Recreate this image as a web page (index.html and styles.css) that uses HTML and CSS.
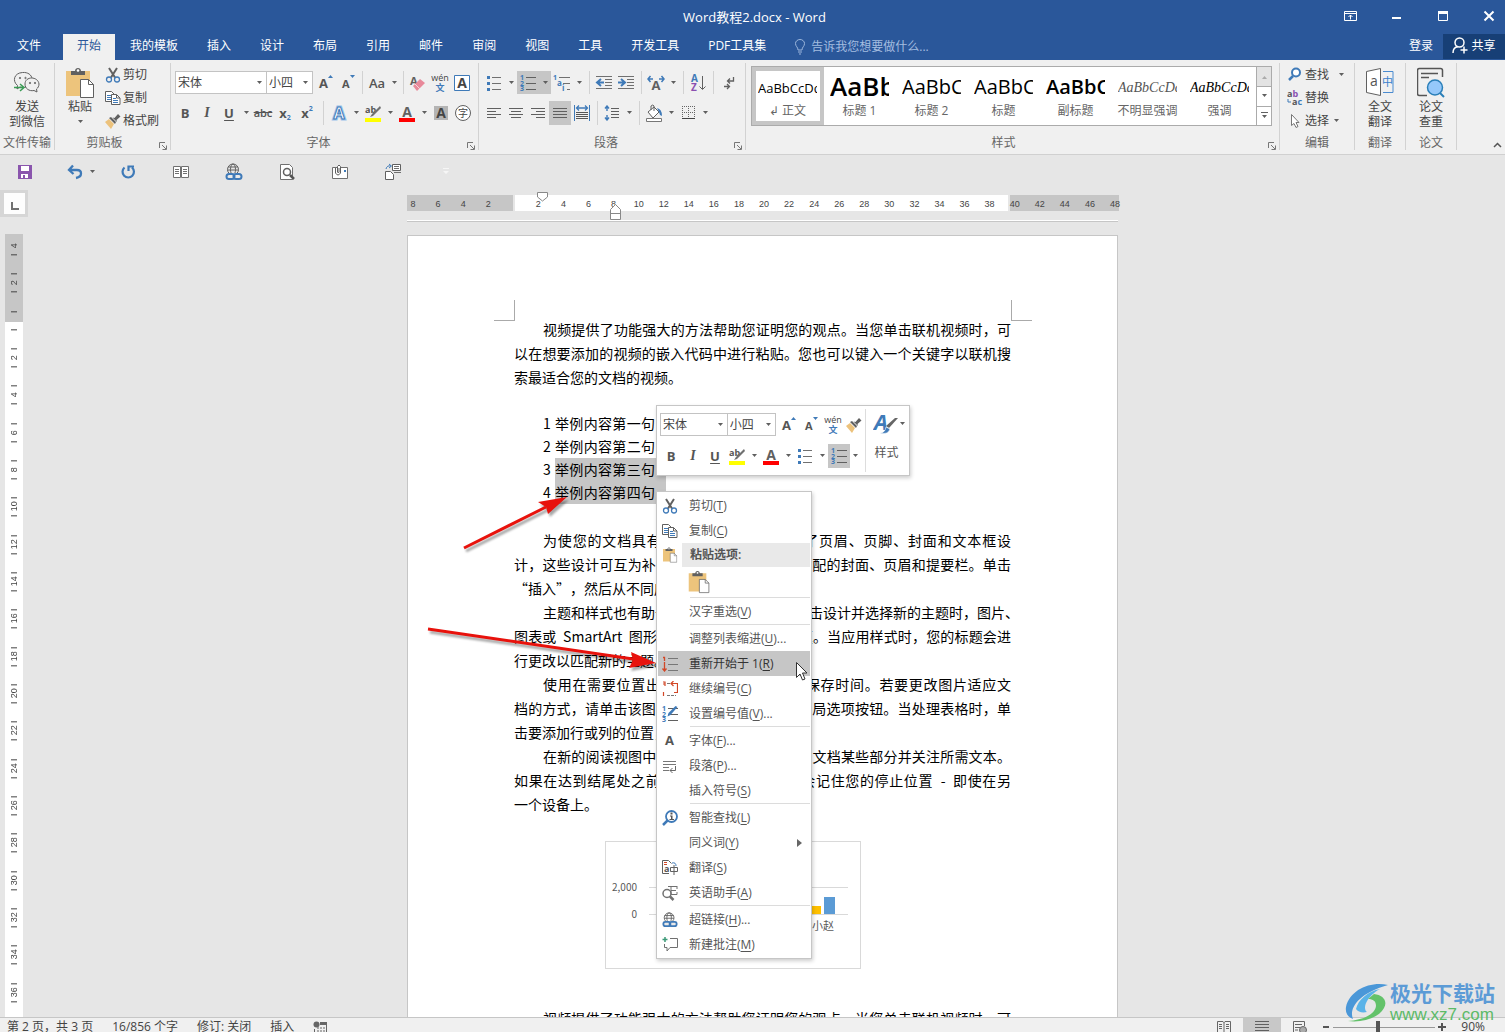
FILE: index.html
```html
<!DOCTYPE html>
<html lang="zh-CN">
<head>
<meta charset="utf-8">
<title>Word教程2.docx - Word</title>
<link rel="stylesheet" href="styles.css">
</head>
<body>
<svg class="defs" aria-hidden="true">
  <symbol id="caret" viewBox="0 0 7 4"><path d="M1 0h5L3.500 3z" fill="#5f5f5f"/></symbol>
  <symbol id="launcher" viewBox="0 0 8 8"><path d="M.5 6V.5H6M3 3l4 4M7.500 3.500v4h-4" fill="none" stroke="#777"/></symbol>
  <symbol id="cut" viewBox="0 0 16 16"><path d="M4 1l6 9.500M12 1l-6 9.500" stroke="#606060" stroke-width="2" fill="none"/><circle cx="4" cy="12.500" r="2.500" fill="none" stroke="#3f7ab8" stroke-width="1.300"/><circle cx="12" cy="12.500" r="2.500" fill="none" stroke="#3f7ab8" stroke-width="1.300"/></symbol>
  <symbol id="copy" viewBox="0 0 16 16"><path d="M.5 1.500h6l3 3v7h-9z" fill="#fff" stroke="#606060"/><path d="M2 5.500h4M2 7.500h4M2 9.500h4" stroke="#3f7ab8"/><path d="M6.500 4.500h5l3.500 3.500v6.500H6.500z" fill="#fff" stroke="#606060"/><path d="M11.500 4.500V8H15" fill="none" stroke="#606060"/><path d="M8 8.500h3M8 10.500h5M8 12.500h5" stroke="#3f7ab8"/></symbol>
  <symbol id="brush" viewBox="0 0 16 16"><path d="M0 9l4-3 5 5-3 5z" fill="#ecc27c"/><path d="M4 5l2-1 5 5-1 2z" fill="#606060"/><path d="M7.500 4.500l2 .5 3.500-4 2.500 2.500-4 3.500.5 2z" fill="#606060"/></symbol>
  <symbol id="paste" viewBox="0 0 30 32"><path d="M1 4h24v25H1z" fill="#edc47c"/><path d="M6 8V4h4c0-4 6-4 6 0h4v4z" fill="#606060"/><circle cx="13" cy="3.500" r="1.300" fill="#fff"/><path d="M15.500 12.500h8l5 5v13h-13z" fill="#fff" stroke="#606060"/><path d="M23.500 12.500v5h5" fill="none" stroke="#606060"/></symbol>
  <symbol id="grow" viewBox="0 0 18 18"><text x="2" y="14" class="ic b" font-size="13" fill="#555">A</text><path d="M11 4l2.500-3L16 4z" fill="#3f7ab8"/></symbol>
  <symbol id="shrink" viewBox="0 0 18 18"><text x="3" y="14" class="ic b" font-size="11" fill="#555">A</text><path d="M11 1h5l-2.500 3z" fill="#3f7ab8"/></symbol>
  <symbol id="wen" viewBox="0 0 18 18"><text x="9" y="7" text-anchor="middle" class="ic" font-size="9" fill="#444">wén</text><text x="9" y="17" text-anchor="middle" class="ic b" font-size="9" fill="#3f7ab8">文</text></symbol>
  <symbol id="mark" viewBox="0 0 18 18"><text x="1" y="9" class="ic b" font-size="9" fill="#555">ab</text><path d="M16 2L8 10l-2 3 3-1 8-8z" fill="#707070"/><path d="M1 14h16v4H1z" fill="#ff0"/></symbol>
  <symbol id="fcolor" viewBox="0 0 18 18"><text x="9" y="13" text-anchor="middle" class="ic b" font-size="14" fill="#606060">A</text><path d="M1 14h16v4H1z" fill="#f00"/></symbol>
  <symbol id="bullets" viewBox="0 0 16 16"><path d="M6 2.500h9M6 8.500h9M6 14.500h9" stroke="#707070"/><path d="M1 1h3v3H1zM1 7h3v3H1zM1 13h3v3H1z" fill="#3f7ab8"/></symbol>
  <symbol id="numbers" viewBox="0 0 16 16"><path d="M6 2.500h10M6 8.500h10M6 14.500h10" stroke="#606060"/><text class="ic b" font-size="7" fill="#3f7ab8" x="0" y="5">1</text><text class="ic b" font-size="7" fill="#3f7ab8" x="0" y="11">2</text><text class="ic b" font-size="7" fill="#3f7ab8" x="0" y="16">3</text></symbol>
  <symbol id="globe" viewBox="0 0 18 18"><g fill="none" stroke="#606060"><circle cx="8" cy="6.500" r="5.500"/><ellipse cx="8" cy="6.500" rx="2.500" ry="5.500"/><path d="M3 4h10M2.500 7h11"/></g><path d="M1 10h16v7H1z" fill="#e9e9e9"/><rect x="1.500" y="11" width="8" height="5" rx="2.500" fill="none" stroke="#3f7ab8" stroke-width="2"/><rect x="8.500" y="11" width="8" height="5" rx="2.500" fill="none" stroke="#3f7ab8" stroke-width="2"/></symbol>
</svg>

<div class="app">
  <header class="titlebar">
    <h1 class="title">Word教程2.docx - Word</h1>
    <div class="winctl">
      <button aria-label="功能区显示选项"><svg width="14" height="12" viewBox="0 0 14 12" fill="none" stroke="#fff"><path d="M.5 1.500h12v9H.5zM.5 3.500h12M6.500 9.500V5M4.500 7l2-2 2 2"/></svg></button>
      <button aria-label="最小化"><svg width="12" height="12" viewBox="0 0 12 12"><path d="M1 7h9v2H1z" fill="#fff"/></svg></button>
      <button aria-label="最大化"><svg width="12" height="12" viewBox="0 0 12 12"><path d="M1.500 2v8.500h9V2" fill="none" stroke="#fff"/><path d="M1 1h10v3H1z" fill="#fff"/></svg></button>
      <button aria-label="关闭"><svg width="12" height="12" viewBox="0 0 12 12"><path d="M1.500 1.500l9 9M10.500 1.500l-9 9" stroke="#fff" stroke-width="2"/></svg></button>
    </div>
  </header>

  <nav class="tabs">
    <button class="tab file">文件</button><button class="tab active">开始</button><button class="tab">我的模板</button><button class="tab">插入</button><button class="tab">设计</button><button class="tab">布局</button><button class="tab">引用</button><button class="tab">邮件</button><button class="tab">审阅</button><button class="tab">视图</button><button class="tab">工具</button><button class="tab">开发工具</button><button class="tab">PDF工具集</button>
    <button class="tell"><svg width="12" height="16" viewBox="0 0 12 16" fill="none" stroke="#9cb6dc"><path d="M4 11c0-3-2.500-3.500-2.500-6.500a4.500 4 0 0 1 9 0C10.500 7.500 8 8 8 11zM4 13h4M5 15h2"/></svg>告诉我您想要做什么...</button>
    <button class="login">登录</button>
    <button class="share"><svg width="16" height="17" viewBox="0 0 16 17" fill="none" stroke="#fff" stroke-width="1.500"><circle cx="7.500" cy="5.500" r="4.500"/><path d="M1 16c0-4 2-6 5-6.500M8.500 13h7M12 9.500v7"/></svg>共享</button>
  </nav>

  <section class="ribbon">
    <div class="group g-wechat">
      <div class="body">
        <button class="big"><svg width="28" height="32" viewBox="0 0 28 32" fill="none" stroke="#606060"><path d="M13 20c-2 .5-4 .5-6 0l-3 2 .5-3.500C-1 14 1 6 9.500 5.500 15 5 18.500 8 19 11.500"/><path d="M12 17c0-8 13-8 14 0 0 2-1 4-2.500 5l.5 3-3-1.500c-5 1-9-2-9-6.500z" fill="#f0f0f0"/><circle cx="7" cy="11" r=".7"/><circle cx="12.500" cy="11" r=".7"/><circle cx="17" cy="16" r=".7"/><circle cx="22" cy="16" r=".7"/><path d="M1 20.500h9M7 17l4 3.500L7 24" stroke="#3a9c55" stroke-width="1.500"/></svg>发送<br>到微信</button>
      </div>
      <div class="label">文件传输</div>
    </div>
    <div class="group g-clip launch">
      <div class="body">
        <button class="big"><svg width="30" height="32"><use href="#paste"/></svg>粘贴<svg class="caret below"><use href="#caret"/></svg></button>
        <div class="stack">
          <button class="small"><svg width="16" height="16"><use href="#cut"/></svg>剪切</button>
          <button class="small"><svg width="16" height="16"><use href="#copy"/></svg>复制</button>
          <button class="small"><svg width="16" height="16"><use href="#brush"/></svg>格式刷</button>
        </div>
      </div>
      <div class="label">剪贴板</div><svg class="launcher"><use href="#launcher"/></svg>
    </div>
    <div class="group g-font launch">
      <div class="rows">
        <div class="row">
          <span class="combo wide"><select aria-label="字体"><option>宋体</option></select><svg class="caret"><use href="#caret"/></svg></span><span class="combo"><select aria-label="字号"><option>小四</option></select><svg class="caret"><use href="#caret"/></svg></span>
          <button class="tb first" aria-label="增大字号"><svg width="18" height="18"><use href="#grow"/></svg></button>
          <button class="tb" aria-label="减小字号"><svg width="18" height="18"><use href="#shrink"/></svg></button>
          <i class="sep"></i>
          <button class="tb drop"><span class="aa">Aa</span><svg class="caret"><use href="#caret"/></svg></button>
          <i class="sep"></i>
          <button class="tb" aria-label="清除格式"><svg width="18" height="18" viewBox="0 0 18 18"><text x="1" y="11" class="ic b" font-size="11" fill="#606060">A</text><path d="M4 12l7-7 5 4-8 8z" fill="#e8899a"/><path d="M6 10l5 5" stroke="#f5d5da"/></svg></button>
          <button class="tb" aria-label="拼音指南"><svg width="18" height="18"><use href="#wen"/></svg></button>
          <button class="tb" aria-label="字符边框"><svg width="18" height="18" viewBox="0 0 18 18"><path d="M1.500 1.500h15v15h-15z" fill="#fff" stroke="#3f7ab8"/><text x="9" y="14" text-anchor="middle" class="ic b" font-size="14" fill="#444">A</text></svg></button>
        </div>
        <div class="row second">
          <button class="tb bold">B</button><button class="tb ital">I</button>
          <button class="tb drop"><span class="und">U</span><svg class="caret"><use href="#caret"/></svg></button>
          <button class="tb strike">abc</button>
          <button class="tb bold">x<sub>2</sub></button><button class="tb bold">x<sup>2</sup></button>
          <i class="sep wide"></i>
          <button class="tb drop" aria-label="文本效果"><svg width="18" height="18" viewBox="0 0 18 18"><text x="9" y="15" text-anchor="middle" class="ic b" font-size="16" fill="#fff" stroke="#9cc3ea" stroke-width="3">A</text><text x="9" y="15" text-anchor="middle" class="ic b" font-size="16" fill="#fff" stroke="#3f7ab8">A</text></svg><svg class="caret"><use href="#caret"/></svg></button>
          <button class="tb drop" aria-label="突出显示"><svg width="18" height="18"><use href="#mark"/></svg><svg class="caret"><use href="#caret"/></svg></button>
          <button class="tb drop" aria-label="字体颜色"><svg width="18" height="18"><use href="#fcolor"/></svg><svg class="caret"><use href="#caret"/></svg></button>
          <button class="tb" aria-label="字符底纹"><svg width="16" height="16" viewBox="0 0 16 16"><path d="M1 1h14v14H1z" fill="#b4b4b4"/><text x="8" y="13" text-anchor="middle" class="ic b" font-size="14" fill="#444">A</text></svg></button>
          <button class="tb" aria-label="带圈字符"><svg width="18" height="18" viewBox="0 0 18 18"><circle cx="9" cy="9" r="7.500" fill="#fff" stroke="#606060"/><text x="9" y="13" text-anchor="middle" class="ic" font-size="10" fill="#444">字</text></svg></button>
        </div>
      </div>
      <div class="label">字体</div><svg class="launcher"><use href="#launcher"/></svg>
    </div>
    <div class="group g-para launch">
      <div class="rows">
        <div class="row">
          <button class="tb drop" aria-label="项目符号"><svg width="16" height="16"><use href="#bullets"/></svg><svg class="caret"><use href="#caret"/></svg></button>
          <button class="tb drop on" aria-label="编号"><svg width="16" height="16"><use href="#numbers"/></svg><svg class="caret"><use href="#caret"/></svg></button>
          <button class="tb drop" aria-label="多级列表"><svg width="18" height="18" viewBox="0 0 18 18"><path d="M6 3.500h11M10 9.500h7M14 15.500h3" stroke="#707070"/><text class="ic b" font-size="7" fill="#3f7ab8" x="0" y="6">1</text><text class="ic b" font-size="8" fill="#3f7ab8" x="4" y="12">a</text><text class="ic b" font-size="8" fill="#3f7ab8" x="9" y="17">i</text></svg><svg class="caret"><use href="#caret"/></svg></button>
          <i class="sep mid"></i>
          <button class="tb" aria-label="减少缩进"><svg width="18" height="16" viewBox="0 0 18 16"><path d="M1 1.500h16M10 4.500h7M10 7.500h7M10 10.500h7M1 13.500h16" stroke="#707070"/><path d="M3 7.500h6M6 4L2 7.500 6 11" stroke="#3f7ab8" stroke-width="2" fill="none"/></svg></button>
          <button class="tb" aria-label="增加缩进"><svg width="18" height="16" viewBox="0 0 18 16"><path d="M1 1.500h16M10 4.500h7M10 7.500h7M10 10.500h7M1 13.500h16" stroke="#707070"/><path d="M1 7.500h6M4 4l4 3.500L4 11" stroke="#3f7ab8" stroke-width="2" fill="none"/></svg></button>
          <i class="sep mid"></i>
          <button class="tb drop" aria-label="中文版式"><svg width="18" height="18" viewBox="0 0 18 18"><text x="9" y="16" text-anchor="middle" class="ic b" font-size="13" fill="#606060">A</text><path d="M1 5h5M3.500 2L1 5l2.500 3M12 5h5M14.500 2L17 5l-2.500 3" stroke="#3f7ab8" stroke-width="1.500" fill="none"/></svg><svg class="caret"><use href="#caret"/></svg></button>
          <i class="sep mid"></i>
          <button class="tb" aria-label="排序"><svg width="18" height="18" viewBox="0 0 18 18"><text x="2" y="8" class="ic b" font-size="10" fill="#3f7ab8">A</text><text x="2" y="17" class="ic b" font-size="10" fill="#8a4fb0">Z</text><path d="M13.500 2v13M10.500 12.500l3 3 3-3" stroke="#606060" fill="none"/></svg></button>
          <i class="sep mid"></i>
          <button class="tb" aria-label="显示编辑标记"><svg width="16" height="16" viewBox="0 0 16 16" fill="none" stroke="#606060" stroke-width="1.300"><path d="M13.500 2v4H8M10 3.500L7.500 6 10 8.500M4 11.500h5M7 9l2.500 2.500L7 14"/></svg></button>
        </div>
        <div class="row second">
          <button class="tb" aria-label="左对齐"><svg width="16" height="14" viewBox="0 0 16 14"><path d="M1 2.500h14M1 5.500h9M1 8.500h14M1 11.500h9" stroke="#606060"/></svg></button>
          <button class="tb" aria-label="居中"><svg width="16" height="14" viewBox="0 0 16 14"><path d="M1 2.500h14M3 5.500h10M1 8.500h14M3 11.500h10" stroke="#606060"/></svg></button>
          <button class="tb" aria-label="右对齐"><svg width="16" height="14" viewBox="0 0 16 14"><path d="M1 2.500h14M6 5.500h9M1 8.500h14M6 11.500h9" stroke="#606060"/></svg></button>
          <button class="tb on" aria-label="两端对齐"><svg width="16" height="14" viewBox="0 0 16 14"><path d="M1 2.500h14M1 5.500h14M1 8.500h14M1 11.500h14" stroke="#606060"/></svg></button>
          <button class="tb" aria-label="分散对齐"><svg width="18" height="18" viewBox="0 0 18 18"><path d="M1.500 1v16M16.500 1v16" stroke="#3f7ab8"/><path d="M4 4h10M6 1.500L3.500 4 6 6.500M12 1.500L14.500 4 12 6.500" stroke="#3f7ab8" fill="none" stroke-width="1.300"/><path d="M3 8.500h12M3 10.500h12M3 12.500h12M3 14.500h12" stroke="#555"/></svg></button>
          <i class="sep mid"></i>
          <button class="tb drop" aria-label="行距"><svg width="16" height="16" viewBox="0 0 16 16"><path d="M7 3.500h8M7 6.500h8M7 9.500h8M7 12.500h8" stroke="#606060"/><path d="M3 1v5M1 3.500l2-2.500 2 2.500M3 10v5M1 12.500L3 15l2-2.500" stroke="#3f7ab8" fill="none" stroke-width="1.400"/></svg><svg class="caret"><use href="#caret"/></svg></button>
          <i class="sep mid"></i>
          <button class="tb drop" aria-label="底纹"><svg width="18" height="18" viewBox="0 0 18 18"><path d="M3 8l6-5 5 5-6 6z" fill="#fff" stroke="#606060"/><path d="M6 6V2q2-2 3 0v5" fill="none" stroke="#606060"/><path d="M12 4q5 1 5 8l-2-1-1-3z" fill="#3f7ab8"/><path d="M1.500 14.500h15v3h-15z" fill="#fff" stroke="#777"/></svg><svg class="caret"><use href="#caret"/></svg></button>
          <button class="tb drop" aria-label="边框"><svg width="16" height="16" viewBox="0 0 16 16"><path d="M2.500 1v13M8.500 1v13M14.500 1v13M2 1.500h13M2 7.500h13" stroke="#666" stroke-dasharray="1 1" fill="none"/><path d="M2 13.500h13" stroke="#444"/></svg><svg class="caret"><use href="#caret"/></svg></button>
        </div>
      </div>
      <div class="label">段落</div><svg class="launcher"><use href="#launcher"/></svg>
    </div>
    <div class="group g-styles launch">
      <div class="gallery">
        <button class="style sel"><span class="pv p1">AaBbCcDd</span><span class="nm">↲ 正文</span></button>
        <button class="style"><span class="pv p2">AaBb</span><span class="nm">标题 1</span></button>
        <button class="style"><span class="pv p3">AaBbCc</span><span class="nm">标题 2</span></button>
        <button class="style"><span class="pv p3">AaBbCc</span><span class="nm">标题</span></button>
        <button class="style"><span class="pv p3 heavy">AaBbCc</span><span class="nm">副标题</span></button>
        <button class="style"><span class="pv p4 soft">AaBbCcDd</span><span class="nm">不明显强调</span></button>
        <button class="style"><span class="pv p4">AaBbCcDd</span><span class="nm">强调</span></button>
        <div class="scroll">
          <button class="dim" aria-label="上"><svg width="7" height="4" viewBox="0 0 7 4"><path d="M1 4h5L3.500 1z" fill="#aaa"/></svg></button>
          <button aria-label="下"><svg class="caret"><use href="#caret"/></svg></button>
          <button aria-label="更多"><svg width="7" height="7" viewBox="0 0 7 7"><path d="M0 0h7v1H0zM1 3h5L3.500 6z" fill="#606060"/></svg></button>
        </div>
      </div>
      <div class="label">样式</div><svg class="launcher"><use href="#launcher"/></svg>
    </div>
    <div class="group g-edit">
      <div class="stack">
        <button class="small"><svg width="16" height="16" viewBox="0 0 16 16"><circle cx="9" cy="5.500" r="4" fill="#fff" stroke="#3f7ab8" stroke-width="2"/><path d="M6 9l-4 4" stroke="#3f7ab8" stroke-width="2.500"/></svg>查找<svg class="caret far"><use href="#caret"/></svg></button>
        <button class="small"><svg width="16" height="16" viewBox="0 0 16 16"><text x="0" y="7" class="ic b" font-size="9" fill="#555">a<tspan fill="#8a4fb0">b</tspan></text><text x="5" y="15" class="ic b" font-size="9" fill="#555">a<tspan fill="#3f7ab8">c</tspan></text><path d="M1 9v3h3" stroke="#3f7ab8" fill="none"/></svg>替换</button>
        <button class="small"><svg width="16" height="16" viewBox="0 0 16 16"><path d="M4.500 1.500v11l2.500-2 2 4 2-1-2-4h3z" fill="#fff" stroke="#777"/></svg>选择<svg class="caret"><use href="#caret"/></svg></button>
      </div>
      <div class="label">编辑</div>
    </div>
    <div class="group g-tail">
      <div class="body"><button class="big"><svg width="28" height="32" viewBox="0 0 28 32"><path d="M.5 4.500l14-3v27l-14-3z" fill="#fff" stroke="#606060"/><text x="4" y="19" class="ic" font-size="14" fill="#555">a</text><path d="M17 4.500h10v21H17" fill="none" stroke="#4a8bd0"/><text x="16" y="19" class="ic" font-size="11" fill="#3a80cc">中</text></svg>全文<br>翻译</button></div>
      <div class="label">翻译</div>
    </div>
    <div class="group g-tail">
      <div class="body"><button class="big"><svg width="28" height="32" viewBox="0 0 28 32"><path d="M10 28.500H2.500q-2 0-2-2v-23q0-2 2-2h21q2 0 2 2V10" fill="none" stroke="#555" stroke-width="1.500"/><path d="M4 6.500h17M4 10.500h8" stroke="#555" stroke-width="1.500"/><path d="M22 25l5 5" stroke="#2a7fb8" stroke-width="2"/><circle cx="18" cy="20.500" r="7.500" fill="#95c8fa" stroke="#2a7fb8" stroke-width="1.500"/></svg>论文<br>查重</button></div>
      <div class="label">论文</div>
    </div>
    <div class="group g-end"><svg width="9" height="6" viewBox="0 0 9 6"><path d="M1 5l3.500-3.500L8 5" fill="none" stroke="#555" stroke-width="1.500"/></svg></div>
  </section>

  <div class="qat">
    <button aria-label="保存"><svg width="16" height="16" viewBox="0 0 16 16"><path d="M1 1h14v14H1z" fill="#8a55ad"/><path d="M4 2h8v5H4zM4 10h7v4H8v-3H6v3H4z" fill="#fff"/></svg></button>
    <button class="undo" aria-label="撤消"><svg width="16" height="16" viewBox="0 0 16 16"><path d="M3 6h7q4 0 4 3.500T9 14M6 1.500L2 6l4.500 4" fill="none" stroke="#3f7ab8" stroke-width="2.300"/></svg><svg class="caret"><use href="#caret"/></svg></button>
    <button aria-label="重复"><svg width="16" height="16" viewBox="0 0 16 16"><path d="M4.500 3.500a5.700 5.700 0 1 0 7.500 0M8.500 7V2.500H14" fill="none" stroke="#3f7ab8" stroke-width="2.200"/></svg></button>
    <button aria-label="两页"><svg width="18" height="14" viewBox="0 0 18 14" fill="#fff" stroke="#707070"><path d="M1.500 1.500h7v11h-7zM9.500 1.500h7v11h-7z"/><path d="M3 4.500h4M3 6.500h4M3 8.500h4M11 4.500h4M11 6.500h4M11 8.500h4"/></svg></button>
    <button aria-label="超链接"><svg width="18" height="18"><use href="#globe"/></svg></button>
    <button aria-label="打印预览"><svg width="16" height="18" viewBox="0 0 16 18"><path d="M1.500 1.500h9l3 3v12h-12z" fill="#fff" stroke="#707070"/><path d="M11 12l4 4" stroke="#555" stroke-width="2.500"/><circle cx="8" cy="9" r="3.500" fill="#fff" stroke="#606060" stroke-width="1.500"/></svg></button>
    <button aria-label="附件"><svg width="18" height="16" viewBox="0 0 18 16"><path d="M1.500 3.500h15v11h-15z" fill="#fff" stroke="#707070"/><path d="M13 6h2v2h-2z" fill="#3f7ab8"/><path d="M4.500 4v5q2.500 4 5 0V2.500q-1.500-3-3 0V8q1 2 1.500 0V4" fill="#fff" stroke="#606060"/></svg></button>
    <button aria-label="切换"><svg width="18" height="18" viewBox="0 0 18 18"><path d="M1.500 8.500h5l3 3v5h-8zM8.500 1.500h8v6h-8z" fill="#fff" stroke="#606060"/><path d="M10 3.500h5M10 5.500h5M10 9.500h7" stroke="#707070"/><path d="M2 6q1-4 5-3M5 1l2.500 2L5 5" fill="none" stroke="#3f7ab8"/></svg></button>
    <button aria-label="自定义"><svg width="7" height="7" viewBox="0 0 7 7"><path d="M0 0h6v1H0zM0 3h6L3 6z" fill="#f6f6f6"/></svg></button>
  </div>

  <main class="workspace">
    <aside class="side">
      <button class="tabstop" aria-label="制表符"><svg width="8" height="8" viewBox="0 0 8 8"><path d="M1 0v7h7" fill="none" stroke="#707070" stroke-width="2"/></svg></button>
      <div class="vruler"><ol>
        <li>4</li><li>2</li><li></li><li>2</li><li>4</li><li>6</li><li>8</li><li>10</li><li>12</li><li>14</li><li>16</li><li>18</li><li>20</li><li>22</li><li>24</li><li>26</li><li>28</li><li>30</li><li>32</li><li>34</li><li>36</li>
      </ol></div>
    </aside>
    <div class="canvas">
      <div class="hruler">
        <ol><li>8</li><li>6</li><li>4</li><li>2</li><li></li><li>2</li><li>4</li><li>6</li><li>8</li><li>10</li><li>12</li><li>14</li><li>16</li><li>18</li><li>20</li><li>22</li><li>24</li><li>26</li><li>28</li><li>30</li><li>32</li><li>34</li><li>36</li><li>38</li><li>40</li><li>42</li><li>44</li><li>46</li><li>48</li></ol>
        <svg class="mk first" width="11" height="10" viewBox="0 0 11 10"><path d="M.5.5h10V5L5.500 9 .5 5z" fill="#fff" stroke="#888"/></svg>
        <svg class="mk left" width="11" height="16" viewBox="0 0 11 16"><path d="M.5 15.500v-10l5-5 5 5v10zM.5 9.500h10" fill="#fff" stroke="#888"/></svg>
        <svg class="mk right" width="11" height="10" viewBox="0 0 11 10"><path d="M.5 9.500v-4l5-5 5 5v4z" fill="#fff" stroke="#888"/></svg>
      </div>
      <div class="prevpage"></div>
      <article class="page">
        <i class="corner tl"></i><i class="corner tr"></i>
        <p><span class="ln in">视频提供了功能强大的方法帮助您证明您的观点。当您单击联机视频时，可</span><span class="ln">以在想要添加的视频的嵌入代码中进行粘贴。您也可以键入一个关键字以联机搜</span><span class="ln end">索最适合您的文档的视频。</span></p>
        <ol class="list">
          <li><b>1</b><span>举例内容第一句</span></li>
          <li><b>2</b><span>举例内容第二句</span></li>
          <li class="picked"><b>3</b><span>举例内容第三句</span></li>
          <li class="picked"><b>4</b><span>举例内容第四句</span></li>
        </ol>
        <p><span class="ln in">为使您的文档具有专业外观，Word 提供了页眉、页脚、封面和文本框设</span><span class="ln">计，这些设计可互为补充。例如，您可以添加匹配的封面、页眉和提要栏。单击</span><span class="ln end">“插入”，然后从不同库中选择所需元素。</span></p>
        <p><span class="ln in">主题和样式也有助于文档保持协调。当您单击设计并选择新的主题时，图片、</span><span class="ln">图表或&nbsp; SmartArt &nbsp;图形将会更改以匹配新的主题。当应用样式时，您的标题会进</span><span class="ln end">行更改以匹配新的主题。</span></p>
        <p><span class="ln in">使用在需要位置出现的新按钮在 Word 中保存时间。若要更改图片适应文</span><span class="ln">档的方式，请单击该图片，图片旁边将会显示布局选项按钮。当处理表格时，单</span><span class="ln end">击要添加行或列的位置，然后单击加号。</span></p>
        <p><span class="ln in">在新的阅读视图中阅读更加容易。可以折叠文档某些部分并关注所需文本。</span><span class="ln">如果在达到结尾处之前需要停止读取，Word 会记住您的停止位置&nbsp; -&nbsp; 即使在另</span><span class="ln end">一个设备上。</span></p>
        <svg class="chart" width="256" height="128" viewBox="605 841 256 128">
          <rect x="605.500" y="841.500" width="255" height="127" fill="#fff" stroke="#d9d9d9"/>
          <path d="M649 887.500h199M649 914.500h199" stroke="#d9d9d9"/>
          <rect x="812" y="906" width="9" height="8" fill="#ffc000"/><rect x="824" y="897" width="11" height="17" fill="#5b9bd5"/>
          <g font-size="10" fill="#595959"><text x="637" y="891" text-anchor="end">2,000</text><text x="637" y="918" text-anchor="end">0</text><text x="812" y="930" font-size="11">小赵</text></g>
        </svg>
        <p><span class="ln in">视频提供了功能强大的方法帮助您证明您的观点。当您单击联机视频时，可</span></p>

        <svg class="arrows" width="250" height="190" viewBox="422 490 250 190">
          <g class="shade" stroke="#e8120c" fill="#e8120c">
            <path d="M464 548l82-41" stroke-width="3"/><path d="M567 497l-19 17-2-7-8-5z" stroke="none"/>
            <path d="M428 629l205 30" stroke-width="3"/><path d="M656 663l-27 5 4-8-2-8z" stroke="none"/>
          </g>
        </svg>

        <div class="mini">
          <div class="rows">
            <div class="row">
              <span class="combo mw"><select aria-label="字体"><option>宋体</option></select><svg class="caret"><use href="#caret"/></svg></span><span class="combo mn"><select aria-label="字号"><option>小四</option></select><svg class="caret"><use href="#caret"/></svg></span>
              <button class="tb first" aria-label="增大字号"><svg width="18" height="18"><use href="#grow"/></svg></button>
              <button class="tb" aria-label="减小字号"><svg width="18" height="18"><use href="#shrink"/></svg></button>
              <button class="tb" aria-label="拼音指南"><svg width="18" height="18"><use href="#wen"/></svg></button>
              <button class="tb" aria-label="格式刷"><svg width="16" height="16"><use href="#brush"/></svg></button>
            </div>
            <div class="row second">
              <button class="tb bold">B</button><button class="tb ital">I</button><button class="tb"><span class="und solo">U</span></button>
              <button class="tb drop" aria-label="突出显示"><svg width="18" height="18"><use href="#mark"/></svg><svg class="caret"><use href="#caret"/></svg></button>
              <button class="tb drop" aria-label="字体颜色"><svg width="18" height="18"><use href="#fcolor"/></svg><svg class="caret"><use href="#caret"/></svg></button>
              <button class="tb drop" aria-label="项目符号"><svg width="16" height="16"><use href="#bullets"/></svg><svg class="caret"><use href="#caret"/></svg></button>
              <button class="tb on" aria-label="编号"><svg width="16" height="16"><use href="#numbers"/></svg></button><svg class="caret out"><use href="#caret"/></svg>
            </div>
          </div>
          <button class="mstyle"><span><svg width="26" height="26" viewBox="0 0 26 26"><text x="1" y="19" class="ic b" font-size="22" font-style="italic" fill="#3f7ab8">A</text><path d="M25 7l-9 10-3-2 9-8z" fill="#666"/><path d="M7 22q5 0 6-6l4 2q-2 6-10 4z" fill="#3f7ab8" stroke="#fff" stroke-width=".6"/></svg><svg class="caret"><use href="#caret"/></svg></span>样式</button>
        </div>

        <div class="menu" role="menu">
          <button class="mi"><svg viewBox="0 0 16 16"><use href="#cut"/></svg><span>剪切(<u>T</u>)</span></button>
          <button class="mi"><svg viewBox="0 0 16 16"><use href="#copy"/></svg><span>复制(<u>C</u>)</span></button>
          <div class="mh"><svg viewBox="0 0 30 32"><use href="#paste"/></svg><span>粘贴选项:</span></div>
          <button class="mp" aria-label="保留源格式"><svg width="22" height="24" viewBox="0 0 30 32"><use href="#paste"/></svg></button>
          <hr>
          <button class="mi"><svg></svg><span>汉字重选(<u>V</u>)</span></button>
          <hr>
          <button class="mi"><svg></svg><span>调整列表缩进(<u>U</u>)...</span></button>
          <button class="mi hot"><svg viewBox="0 0 16 16"><path d="M6 2.500h10M6 8.500h10M6 14.500h10" stroke="#777"/><path d="M2.500 6v9M.5 12.500l2 2.500 2-2.500M1 1.500h1.500V5" stroke="#d24726" fill="none" stroke-width="1.300"/></svg><span>重新开始于 1(<u>R</u>)</span></button>
          <button class="mi"><svg viewBox="0 0 16 16"><path d="M5 2.500h4M5 14.500h9" stroke="#777" stroke-dasharray="3 1"/><path d="M9 2.500h6.500v9H12M11.500 0L9 2.500 11.500 5M1 1h2v2H1M3 1v4M1.500 11v4" stroke="#d24726" fill="none" stroke-width="1.200"/></svg><span>继续编号(<u>C</u>)</span></button>
          <button class="mi"><svg viewBox="0 0 16 16"><use href="#numbers"/><path d="M15.500 1l-7 8-3 1.500 1-3.500 7-7z" fill="#3f7ab8"/></svg><span>设置编号值(<u>V</u>)...</span></button>
          <hr>
          <button class="mi"><svg viewBox="0 0 16 16"><text x="3" y="12" class="ic b" font-size="13" fill="#555">A</text></svg><span>字体(<u>F</u>)...</span></button>
          <button class="mi"><svg viewBox="0 0 16 16"><path d="M1 3.500h13M1 6.500h13M1 9.500h6M1 12.500h6" stroke="#777"/><path d="M13.500 8v4.500H8M10.500 10L8 12.500l2.500 2.500" fill="none" stroke="#666"/></svg><span>段落(<u>P</u>)...</span></button>
          <button class="mi"><svg></svg><span>插入符号(<u>S</u>)</span></button>
          <hr>
          <button class="mi"><svg viewBox="0 0 16 16"><circle cx="9.500" cy="6.500" r="5.500" fill="#fff" stroke="#3f7ab8" stroke-width="1.800"/><path d="M5.500 10.500L1 15" stroke="#3f7ab8" stroke-width="2.500"/><path d="M8.500 2.500h2v2h-2zM8 5.500h2.500V9H12v1H7.500V9H9V6.500H8z" fill="#555"/></svg><span>智能查找(<u>L</u>)</span></button>
          <button class="mi"><svg></svg><span>同义词(<u>Y</u>)</span><i class="sub"></i></button>
          <button class="mi"><svg viewBox="0 0 16 16"><path d="M7 13.500H.5V.5h6l3 3" fill="#fff" stroke="#606060"/><path d="M2 2.500h3M2 4.500h3" stroke="#d24726"/><text x="2" y="12" class="ic b" font-size="9" fill="#555">a</text><path d="M8.500 7.500h7v4h-7zM12 5v10" fill="none" stroke="#606060"/><path d="M10 3q4-1 4 3" fill="none" stroke="#3f7ab8"/></svg><span>翻译(<u>S</u>)</span></button>
          <button class="mi"><svg viewBox="0 0 16 16" fill="none" stroke="#707070"><circle cx="5" cy="8.500" r="4" stroke-width="1.500"/><path d="M8 11.500l3.500 3.500" stroke-width="2.500"/><path d="M6 1.500h9M15 1v3M9 2v7M9 5.500h5M9 9.500h6V7"/></svg><span>英语助手(<u>A</u>)</span></button>
          <hr>
          <button class="mi"><svg viewBox="0 0 18 18"><use href="#globe"/></svg><span>超链接(<u>H</u>)...</span></button>
          <button class="mi"><svg viewBox="0 0 16 16"><path d="M8 1.500h7.500v9H8L5 14v-3.500H2.500V7" fill="none" stroke="#707070"/><path d="M3 0v5M.5 2.500h5" stroke="#3c9a78" stroke-width="1.500"/></svg><span>新建批注(<u>M</u>)</span></button>
        </div>
        <svg class="cursor" width="14" height="21" viewBox="0 0 14 21"><path d="M1.500 1.500v15l3.500-3.500 2.500 6 2.500-1-2.500-6h4.500z" fill="#fff" stroke="#333"/></svg>
      </article>
    </div>
  </main>

  <footer class="status">
    <span>第 2 页，共 3 页</span><span>16/856 个字</span><span>修订: 关闭</span><span>插入</span>
    <svg width="14" height="14" viewBox="0 0 14 14"><circle cx="3.500" cy="3.500" r="3" fill="#666"/><path d="M7 1.500h6.500v12H1.500V8" fill="none" stroke="#666"/><path d="M7 1h7v3H7z" fill="#666"/><path d="M4 7h8M4 10h8M4 12.500h8" stroke="#666" stroke-dasharray="2 1"/></svg>
    <div class="right">
      <button aria-label="阅读视图"><svg width="14" height="14" viewBox="0 0 14 14"><path d="M.5 1.500h5.500l1 1 1-1h5.500v11H8l-1 1-1-1H.5zM7 2v11M2 4.500h3M2 6.500h3M2 8.500h3M9 4.500h3M9 6.500h3M9 8.500h3" fill="none" stroke="#666"/></svg></button>
      <button class="cur" aria-label="页面视图"><svg width="14" height="14" viewBox="0 0 14 14"><path d="M0 1.500h14M0 4.500h14M0 7.500h14M0 10.500h14M0 13.500h14" stroke="#606060"/></svg></button>
      <button aria-label="Web 版式"><svg width="14" height="14" viewBox="0 0 14 14"><path d="M6 12.500H.5v-11h11V6M2 4.500h7M2 7.500h5M2 10h3" fill="none" stroke="#666"/><circle cx="10" cy="10" r="3.500" fill="#aaa" stroke="#666"/></svg></button>
      <button class="zb" aria-label="缩小"><svg width="6" height="10" viewBox="0 0 6 10"><path d="M0 4h6v2H0z" fill="#555"/></svg></button>
      <input class="zoom" type="range" min="10" max="170" value="80" aria-label="缩放">
      <button class="zb" aria-label="放大"><svg width="8" height="10" viewBox="0 0 8 10"><path d="M0 4h3V1h2v3h3v2H5v3H3V6H0z" fill="#555"/></svg></button>
      <span class="pct">90%</span>
    </div>
  </footer>

  <div class="brand">
    <svg width="46" height="42" viewBox="0 0 46 42"><path d="M44 3C26-1 6 8 2 25c-1 6 2 10 7 12C5 28 12 12 44 3z" fill="#4a97d8"/><path d="M36 7C24 9 14 18 12 27c2 3 6 4 11 3-5-4 0-16 13-23z" fill="#5ab3e8"/><path d="M30 12c9 1 14 7 10 14C35 36 18 41 4 39c14-1 27-6 28-15 0-5-3-7-8-7z" fill="#63c26a"/></svg>
    <div><strong>极光下载站</strong><em>www.xz7.com</em></div>
  </div>
</div>
</body>
</html>
```
FILE: styles.css
```css
* { box-sizing: border-box; }
body { margin: 0; background: #e6e6e6; color: #444; font: 12px/16px "Open Sans", "Noto Sans CJK SC", sans-serif; }
button { font: inherit; color: inherit; background: none; border: 0; padding: 0; margin: 0; display: flex; align-items: center; justify-content: center; white-space: nowrap; }
ol { list-style: none; margin: 0; padding: 0; }
p { margin: 0; }
svg { flex: none; display: block; }
.defs { display: none; }
.ic { font-family: "Open Sans", "Noto Sans CJK SC", sans-serif; }
.b { font-weight: 700; }
.caret { width: 7px; height: 4px; }

.app { position: relative; display: flex; flex-direction: column; height: 100vh; overflow: hidden; }

/* Title bar and tabs */
.titlebar { flex: none; display: grid; place-items: center; height: 34px; background: #2a579a; color: #fff; position: relative; padding-left: 4px; }
.title { margin: 0; font-size: 13px; font-weight: 400; line-height: 18px; }
.winctl { position: absolute; right: 0; top: 0; display: flex; height: 32px; padding-right: 2px; }
.winctl button { width: 46px; }
.winctl button:last-child { width: 28px; margin-left: 9px; }
.tabs { flex: none; display: flex; gap: 1px; height: 26px; background: #2a579a; color: #fff; }
.tab { padding: 0 14px 2px; }
.tab.file { padding: 0 17px 2px; margin-right: 4px; }
.tab.active { background: #f0f0f0; color: #2a579a; }
.tell { gap: 5px; margin-left: 13px; color: #a4bde0; }
.login { margin-left: auto; padding: 0 9px 2px; }
.share { width: 62px; height: 25px; gap: 3px; padding-bottom: 2px; background: #173f76; }

/* Ribbon */
.ribbon { flex: none; display: flex; height: 95px; padding: 3px 0 4px; background: #f0f0f0; border-bottom: 1px solid #d0d0d0; }
.group { position: relative; flex: none; display: flex; flex-direction: column; justify-content: space-between; border-right: 1px solid #d2d2d2; }
.g-wechat { width: 55px; }
.g-clip { width: 116px; }
.g-font { width: 308px; padding-left: 4px; }
.g-para { width: 267px; padding-left: 4px; }
.g-styles { flex: 1 1 auto; padding: 3px 7px 0 5px; min-width: 300px; }
.g-edit { width: 75px; padding-left: 7px; }
.g-tail { width: 51px; }
.g-end { width: 48px; border: 0; padding: 0 3px 2px; justify-content: flex-end; align-items: flex-end; }
.label { height: 15px; text-align: center; color: #666; white-space: nowrap; }
.launch .label { padding-right: 16px; }
.g-edit .label { margin-left: -7px; }
.launcher { position: absolute; right: 3px; bottom: 0; width: 8px; height: 8px; }
.body { display: flex; }
.big { flex-direction: column; width: 100%; padding-top: 4px; line-height: 15px; }
.g-clip .big { width: 38px; margin: 0 6px; justify-content: flex-start; }
.caret.below { margin-top: 6px; }
.stack { display: flex; flex-direction: column; }
.small { height: 23px; gap: 2px; justify-content: flex-start; }
.small .caret { margin-left: 2px; }
.small .caret.far { margin-left: 7px; }
.rows { display: flex; flex-direction: column; gap: 7px; padding-top: 8px; }
.row { display: flex; height: 23px; }
.row.second { height: 24px; }
.g-font .row.second { margin-left: -1px; }
.combo { position: relative; width: 47px; height: 23px; margin-left: -1px; }
.combo.wide { width: 92px; margin-left: 0; }
.combo select { appearance: none; width: 100%; height: 100%; padding: 0 2px; border: 1px solid #c3c3c3; border-radius: 0; background: #fff; color: #444; font: inherit; }
.combo .caret { position: absolute; right: 4px; top: 10px; pointer-events: none; }
.tb { width: 22px; height: 100%; color: #555; }
.tb.first { margin-left: 2px; }
.tb.drop { width: 34px; gap: 5px; padding-left: 2px; justify-content: flex-start; }
.tb.drop svg:first-child { width: 18px; }
.tb.on { background: #c6c6c6; }
.sep { border-right: 1px solid #d2d2d2; }
.g-font .sep { width: 4px; margin-right: 3px; }
.g-font .sep.wide { width: 6px; margin-right: 4px; }
.sep.mid { width: 5px; margin-right: 3px; }
.aa { font-size: 13px; font-weight: 600; width: 18px; }
.bold { font-weight: 700; font-size: 13px; }
.ital { font: italic 700 14px "Liberation Serif", serif; }
.und { font-weight: 700; font-size: 13px; text-decoration: underline; width: 18px; text-underline-offset: 2px; }
.und.solo { width: auto; }
.strike { font-size: 11px; font-weight: 600; text-decoration: line-through; }
sub, sup { font-size: 7px; line-height: 1; color: #3f7ab8; }
sub { margin-top: 9px; }
sup { margin-bottom: 9px; }

.gallery { display: flex; height: 60px; border: 1px solid #ababab; background: #fff; overflow: hidden; }
.style { flex: 1 1 72px; min-width: 0; flex-direction: column; justify-content: flex-start; padding: 6px 7px 0 6px; color: #666; }
.style.sel { border: 4px solid #c6c6c6; padding: 2px 3px 0 2px; }
.pv { width: 100%; height: 30px; overflow: hidden; text-align: left; line-height: 30px; color: #000; }
.p1 { font-size: 13px; }
.p2 { font-size: 26px; font-weight: 600; line-height: 26px; }
.p3 { font-size: 20px; line-height: 28px; }
.heavy { font-weight: 600; }
.p4 { font: italic 14px/30px "Liberation Serif", serif; }
.soft { color: #555; }
.scroll { flex: none; width: 15px; border-left: 1px solid #ababab; display: grid; grid-template-rows: repeat(3, 1fr); }
.scroll button + button { border-top: 1px solid #ababab; }
.dim { background: #e3e3e3; }

/* Quick access bar */
.qat { flex: none; display: flex; height: 35px; padding: 0 0 2px 15px; gap: 33px; }
.qat button { width: 20px; }
.qat .undo { margin-left: -4px; width: 34px; gap: 6px; margin-right: -13px; }

/* Workspace */
.workspace { flex: 1 1 0; min-height: 0; display: grid; grid-template-columns: 28px 1fr; padding-right: 8px; overflow: hidden; }
.side { display: flex; flex-direction: column; min-height: 0; }
.tabstop { flex: none; width: 28px; height: 27px; border: 3px solid #d6d6d6; border-left-width: 4px; background: #fdfdfd; padding-top: 5px; }
.vruler { flex: 1 1 0; width: 18px; margin: 17px 0 0 5px; min-height: 0; overflow: hidden; background: linear-gradient(#c6c6c6 88px, #fff 88px); }
.vruler ol { display: grid; grid-template-rows: repeat(21, 1fr); height: 784px; margin-top: -7px; }
.vruler li { display: grid; place-items: center; position: relative; writing-mode: vertical-rl; transform: rotate(180deg); font: 9px/12px "Liberation Sans", sans-serif; color: #444; }
.vruler li::before, .vruler li::after { content: ""; position: absolute; left: 6px; width: 6px; height: 1px; background: #444; top: 9px; }
.vruler li::after { top: auto; bottom: 9px; }
.vruler li:first-child::after { display: none; }

.canvas { display: flex; flex-direction: column; align-items: center; min-width: 0; overflow: hidden; }
.hruler { position: relative; flex: none; width: 712px; height: 16px; margin-top: 5px; background: linear-gradient(90deg, #c6c6c6 106px, #e6e6e6 106px, #e6e6e6 108px, #fff 108px, #fff 601px, #e6e6e6 601px, #e6e6e6 603px, #c6c6c6 603px); }
.hruler ol { display: grid; grid-template-columns: repeat(29, 1fr); margin: 0 -9px 0 -6px; font: 9px/18px "Liberation Sans", sans-serif; text-align: center; color: #444; }
.mk { position: absolute; }
.mk.first { left: 130px; top: -3px; }
.mk.left { left: 203px; top: 9px; }
.mk.right { left: 597px; top: 9px; }
.prevpage { flex: none; width: 711px; height: 2px; margin-top: 9px; background: #fff; border-bottom: 1px solid #c6c6c6; }

.page { position: relative; flex: none; width: 711px; min-height: 1000px; margin-top: 13px; padding: 81px 106px 0; border: 1px solid #c6c6c6; background: #fff; color: #000; font: 14px/24px "Noto Sans CJK SC", sans-serif; text-spacing-trim: space-all; }
.corner { position: absolute; top: 64px; width: 21px; height: 21px; border-bottom: 1px solid #aaa; }
.tl { left: 86px; border-right: 1px solid #aaa; }
.tr { right: 85px; border-left: 1px solid #aaa; }
.ln { display: block; height: 24px; text-align: justify; text-align-last: justify; white-space: nowrap; }
.ln.in { padding-left: 29px; }
.ln.end { text-align-last: left; }
.list { margin: 23px 0 24px; padding-left: 29px; line-height: 23px; }
.list li { display: flex; height: 23px; gap: 4px; }
.list b { font-weight: 400; width: 8px; }
.list span { width: 111px; padding-right: 11px; text-align-last: justify; white-space: nowrap; }
.picked span { background: #c6c6c6; }
.chart { margin: 25px 0 37px 91px; font-family: "Noto Sans CJK SC", sans-serif; }
.arrows { position: absolute; left: 14px; top: 254px; }
.shade { filter: drop-shadow(2px 3px 1px rgba(0, 0, 0, .35)); }

/* Floating toolbar and context menu */
.mini, .menu { position: absolute; border: 1px solid #c6c6c6; background: #fff; box-shadow: 1px 2px 4px rgba(0, 0, 0, .2); font: 12px/16px "Open Sans", "Noto Sans CJK SC", sans-serif; color: #555; }
.mini { left: 248px; top: 169px; width: 254px; height: 71px; display: flex; padding: 0 0 0 3px; }
.mini .rows { width: 206px; border-right: 1px solid #ddd; margin: 3px 0; padding-top: 4px; gap: 8px; }
.mini .combo.mw { width: 69px; margin-left: 0; }
.mini .combo.mn { width: 50px; }
.mini .combo + .tb { margin-left: 3px; }
.out { margin: 10px 0 0 2px; }
.mstyle { flex: 1; flex-direction: column; gap: 8px; justify-content: flex-start; padding: 5px 2px 0 0; }
.mstyle span { display: flex; align-items: center; padding-left: 5px; }
.menu { left: 248px; top: 255px; width: 156px; padding: 1px; }
.mi { position: relative; width: 100%; height: 25px; padding-left: 4px; gap: 11px; justify-content: flex-start; }
.mi svg, .mh svg { width: 16px; height: 16px; }
.mi u { text-underline-offset: 2px; }
.mi.hot { background: #c6c6c6; color: #333; }
.mh { display: flex; align-items: center; gap: 4px; height: 24px; padding-left: 4px; }
.mh span { flex: 1; height: 24px; padding-left: 8px; line-height: 24px; background: #e9e9e9; font-weight: 600; }
.mp { height: 30px; margin-left: 30px; }
.menu hr { height: 1px; margin: 0 0 1px 32px; border: 0; background: #dcdcdc; }
.sub { position: absolute; right: 8px; top: 9px; border: 4px solid transparent; border-left: 5px solid #666; border-right: 0; }
.cursor { position: absolute; left: 387px; top: 425px; }

/* Status bar */
.status { flex: none; display: flex; gap: 19px; height: 15px; padding: 1px 0 0 7px; border-top: 1px solid #c6c6c6; background: #f0f0f0; color: #444; }
.status > * { white-space: nowrap; }
.status > svg { margin-top: 2px; }
.right { display: flex; margin-left: auto; padding-right: 20px; height: 18px; margin-top: -1px; }
.right button { width: 38px; height: 18px; }
.right .cur { background: #c8c8c8; }
.right .zb { width: 14px; }
.zoom { appearance: none; width: 102px; height: 18px; margin: 0; background: linear-gradient(#999, #999) 0 9px / 100% 1px no-repeat; }
.zoom::-webkit-slider-thumb { appearance: none; width: 4px; height: 12px; background: #555; }
.pct { padding: 1px 0 0 12px; }

/* Site mark over the lower right corner */
.brand { position: absolute; right: 10px; bottom: 6px; display: flex; line-height: 22px; }
.brand strong { display: block; font-size: 21px; font-weight: 700; color: #5c9bd6; }
.brand em { display: block; font: 17px/22px "Liberation Sans", sans-serif; color: #5cba68; }
```
